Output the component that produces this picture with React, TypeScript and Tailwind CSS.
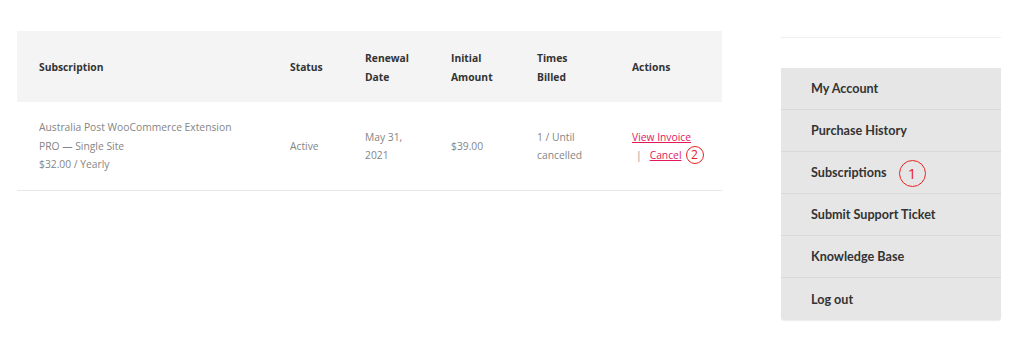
const menu = ["My Account", "Purchase History", "Subscriptions", "Submit Support Ticket", "Knowledge Base", "Log out"];

function Marker({ n, size }: { n: number; size: "sm" | "lg" }) {
  const cls =
    size === "lg"
      ? "w-[27px] h-[27px] text-[15px] border-[1.5px]"
      : "w-[18px] h-[18px] text-[12px] border-[1.5px]";
  return (
    <span
      className={`${cls} inline-flex items-center justify-center rounded-full border-[#e8231f] text-[#e8231f] font-normal leading-none`}
      style={{ fontFamily: "'Open Sans', sans-serif" }}
    >
      {n}
    </span>
  );
}

export default function App() {
  return (
    <div className="w-[1024px] h-[341px] bg-white flex" style={{ fontFamily: "'Open Sans', sans-serif" }}>
      {/* Subscriptions table */}
      <div className="ml-[17px] mt-[31px] w-[705px]">
        <div className="flex h-[71px] pt-[2px] bg-[#f4f4f4] items-center text-[10.3px] font-bold text-[#333] leading-[19px]">
          <div className="w-[251px] pl-[22px]">Subscription</div>
          <div className="w-[75px] pl-[22px]">Status</div>
          <div className="w-[86px] pl-[22px]">Renewal<br />Date</div>
          <div className="w-[86px] pl-[22px]">Initial<br />Amount</div>
          <div className="w-[95px] pl-[22px]">Times<br />Billed</div>
          <div className="w-[112px] pl-[22px]">Actions</div>
        </div>
        <div className="flex h-[89px] items-center border-b border-[#e8e8e8] text-[10.3px] text-[#858585] leading-[18.5px]">
          <div className="w-[251px] pl-[22px]">
            Australia Post WooCommerce Extension<br />PRO — Single Site<br />$32.00 / Yearly
          </div>
          <div className="w-[75px] pl-[22px]">Active</div>
          <div className="w-[86px] pl-[22px]">May 31,<br />2021</div>
          <div className="w-[86px] pl-[22px]">$39.00</div>
          <div className="w-[95px] pl-[22px]">1 / Until<br />cancelled</div>
          <div className="w-[112px] pl-[22px]">
            <div className="text-[#e2185b] underline">View Invoice</div>
            <div className="flex items-center">
              <span className="ml-[4px] mr-[8px] text-[#999]">|</span>
              <span className="text-[#e2185b] underline">Cancel</span>
              <span className="ml-[4px]"><Marker n={2} size="sm" /></span>
            </div>
          </div>
        </div>
      </div>

      {/* Account sidebar */}
      <div className="ml-[59px] mt-[37px] w-[220px]">
        <div className="border-t border-[#efefef]" />
        <div className="mt-[30px] bg-[#e6e6e6] rounded-b-[3px] shadow-[0_1px_1px_rgba(0,0,0,0.08)]" style={{ fontFamily: "Lato, sans-serif" }}>
          {menu.map((item, i) => (
            <div
              key={item}
              className={`h-[42px] flex items-center pl-[30px] pt-[2px] text-[12.6px] font-bold text-[#333] ${i < menu.length - 1 ? "border-b border-[#d9d9d9]" : ""}`}
            >
              {item}
              {item === "Subscriptions" && (
                <span className="ml-[12px]"><Marker n={1} size="lg" /></span>
              )}
            </div>
          ))}
        </div>
      </div>
    </div>
  );
}
